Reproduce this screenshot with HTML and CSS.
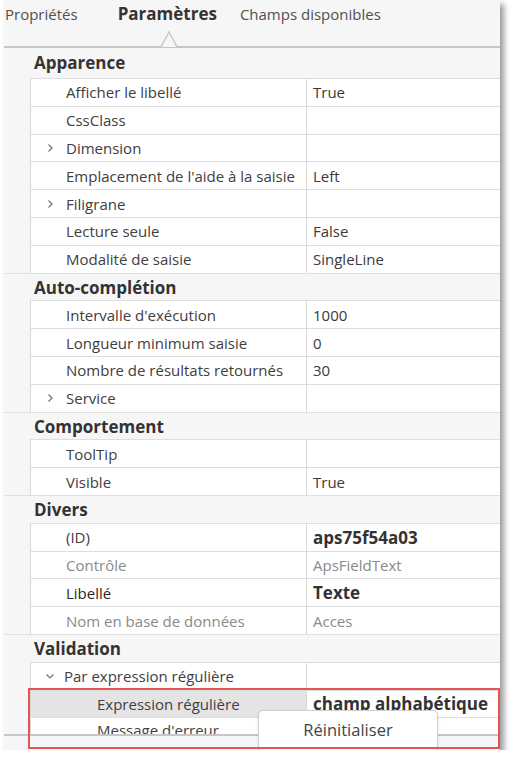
FILE: index.html
```html
<!DOCTYPE html>
<html lang="fr">
<head>
<meta charset="utf-8">
<title>Paramètres</title>
<link rel="stylesheet" href="styles.css">
</head>
<body>
<div class="window">
  <div class="tabs">
    <span class="tab t1">Propriétés</span>
    <span class="tab t2 active">Paramètres</span>
    <span class="tab t3">Champs disponibles</span>
    <svg class="notch" width="18" height="18" viewBox="0 0 18 18"><path d="M1,17 L9,2 L17,17" fill="#f7f7f7" stroke="#c6c6c6" stroke-width="1.5"/></svg>
  </div>
  <div class="grid">
    <div class="cat first">Apparence</div>
    <div class="row"><div class="name">Afficher le libellé</div><div class="val">True</div></div>
    <div class="row"><div class="name">CssClass</div><div class="val"></div></div>
    <div class="row"><div class="name exp"><svg class="chev" width="7" height="10" viewBox="0 0 7 10"><path d="M1.5,1.5 L5,5 L1.5,8.5" fill="none" stroke="#707070" stroke-width="1.2"/></svg>Dimension</div><div class="val"></div></div>
    <div class="row"><div class="name">Emplacement de l'aide à la saisie</div><div class="val">Left</div></div>
    <div class="row"><div class="name exp"><svg class="chev" width="7" height="10" viewBox="0 0 7 10"><path d="M1.5,1.5 L5,5 L1.5,8.5" fill="none" stroke="#707070" stroke-width="1.2"/></svg>Filigrane</div><div class="val"></div></div>
    <div class="row"><div class="name">Lecture seule</div><div class="val">False</div></div>
    <div class="row"><div class="name">Modalité de saisie</div><div class="val">SingleLine</div></div>

    <div class="cat">Auto-complétion</div>
    <div class="row"><div class="name">Intervalle d'exécution</div><div class="val">1000</div></div>
    <div class="row"><div class="name">Longueur minimum saisie</div><div class="val">0</div></div>
    <div class="row"><div class="name">Nombre de résultats retournés</div><div class="val">30</div></div>
    <div class="row"><div class="name exp"><svg class="chev" width="7" height="10" viewBox="0 0 7 10"><path d="M1.5,1.5 L5,5 L1.5,8.5" fill="none" stroke="#707070" stroke-width="1.2"/></svg>Service</div><div class="val"></div></div>

    <div class="cat">Comportement</div>
    <div class="row"><div class="name">ToolTip</div><div class="val"></div></div>
    <div class="row"><div class="name">Visible</div><div class="val">True</div></div>

    <div class="cat">Divers</div>
    <div class="row"><div class="name">(ID)</div><div class="val bold">aps75f54a03</div></div>
    <div class="row"><div class="name dis">Contrôle</div><div class="val dis">ApsFieldText</div></div>
    <div class="row"><div class="name strong">Libellé</div><div class="val bold">Texte</div></div>
    <div class="row"><div class="name dis">Nom en base de données</div><div class="val dis">Acces</div></div>

    <div class="cat">Validation</div>
    <div class="row"><div class="name exp"><svg class="chev down" width="10" height="7" viewBox="0 0 10 7"><path d="M1.5,1.5 L5,5 L8.5,1.5" fill="none" stroke="#707070" stroke-width="1.2"/></svg>Par expression régulière</div><div class="val"></div></div>
    <div class="row"><div class="name sub selected">Expression régulière</div><div class="val bold">champ alphabétique</div></div>
    <div class="row last"><div class="name sub">Message d'erreur</div><div class="val"></div></div>
  </div>
  <div class="highlight"></div>
  <div class="menu">Réinitialiser</div>
</div>
</body>
</html>
```
FILE: styles.css
```css
* { box-sizing: border-box; }
body {
  margin: 0;
  background: #ffffff;
  font-family: "Open Sans", "Noto Sans", "DejaVu Sans", sans-serif;
  color: #404040;
}
.window {
  position: relative;
  margin-left: 4px;
  width: 496px;
  height: 750px;
  background: #f6f6f6;
  box-shadow: 4px 4px 6px rgba(0, 0, 0, 0.4);
}
.tabs {
  position: relative;
  height: 48px;
  display: flex;
  align-items: baseline;
  padding-top: 2px;
  padding-left: 1px;
  font-size: 15px;
  color: #505050;
  border-bottom: 2px solid #c6c6c6;
}
.tab { white-space: nowrap; }
.t2 { margin-left: 40px; font-weight: 700; font-size: 17px; color: #333; }
.t3 { margin-left: 23px; }
.notch {
  position: absolute;
  left: 156px;
  top: 30px;
}
.grid {
  height: 688px;
  overflow: hidden;
  border-bottom: 2px solid #c6c6c6;
}
.cat {
  height: 27.8px;
  line-height: 27px;
  padding-left: 30px;
  font-weight: 700;
  font-size: 17px;
  color: #333;
  border-top: 1px solid #e0e0e0;
}
.cat.first { border-top: 0; height: 30px; line-height: 30px; }
.row {
  display: grid;
  grid-template-columns: 276px 1fr;
  margin-left: 26px;
  height: 27.8px;
  background: #fff;
  border-left: 1px solid #d8d8d8;
  border-top: 1px solid #dedede;
  font-size: 15px;
}
.name {
  display: flex;
  align-items: center;
  padding-left: 35px;
  border-right: 1px solid #d8d8d8;
  white-space: nowrap;
  overflow: hidden;
}
.name.exp { padding-left: 16px; }
.chev { margin-right: 12px; flex: none; }
.chev.down { margin-left: -2px; margin-right: 9px; }
.name.sub { padding-left: 66px; }
.row.last .name { padding-bottom: 4px; }
.name.selected { background: #e4e4e4; }
.name.strong { color: #2a2a2a; }
.val {
  display: flex;
  align-items: center;
  padding-left: 6px;
  color: #3a3a3a;
  white-space: nowrap;
}
.bold { font-weight: 700; font-size: 17px; color: #333; }
.dis { color: #8a8a8a; }
.highlight {
  position: absolute;
  left: 24px;
  top: 688px;
  width: 472px;
  height: 61px;
  border: 2px solid #e25555;
  pointer-events: none;
  z-index: 2;
}
.menu {
  position: absolute;
  left: 254px;
  top: 710px;
  width: 180px;
  height: 42px;
  background: #fff;
  border: 1px solid #d0d0d0;
  border-radius: 5px;
  box-shadow: 0 1px 3px rgba(0, 0, 0, 0.12);
  display: flex;
  align-items: center;
  justify-content: center;
  padding-bottom: 4px;
  font-size: 16.5px;
  color: #444;
  z-index: 1;
}
```
